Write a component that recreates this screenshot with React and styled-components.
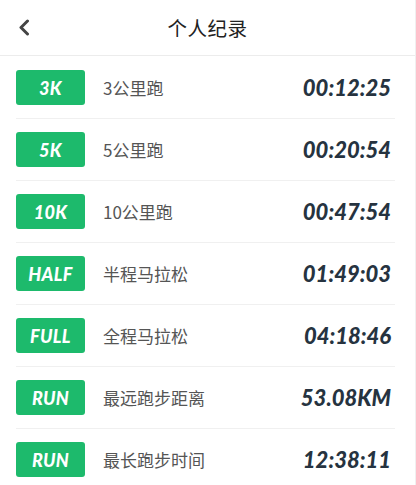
import React from 'react';
import styled, { createGlobalStyle } from 'styled-components';

const GlobalStyle = createGlobalStyle`
  html, body {
    margin: 0;
    padding: 0;
    background: #fff;
  }
  body {
    font-family: "Noto Sans CJK SC", "Noto Sans", sans-serif;
  }
`;

const records = [
  { tag: '3K', name: '3公里跑', value: '00:12:25' },
  { tag: '5K', name: '5公里跑', value: '00:20:54' },
  { tag: '10K', name: '10公里跑', value: '00:47:54' },
  { tag: 'HALF', name: '半程马拉松', value: '01:49:03' },
  { tag: 'FULL', name: '全程马拉松', value: '04:18:46' },
  { tag: 'RUN', name: '最远跑步距离', value: '53.08KM' },
  { tag: 'RUN', name: '最长跑步时间', value: '12:38:11' },
];

const Page = styled.div`
  width: 416px;
  height: 485px;
  overflow: hidden;
  box-sizing: border-box;
  border-right: 1px solid #f0f0f0;
  background: #fff;
`;

const Header = styled.div`
  height: 55px;
  display: flex;
  align-items: center;
  justify-content: center;
  position: relative;
  border-bottom: 1px solid #ececec;
`;

const BackButton = styled.div`
  position: absolute;
  left: 14px;
  top: 17px;
  width: 20px;
  height: 20px;
  display: flex;
  align-items: center;
  justify-content: center;
`;

const Title = styled.div`
  font-size: 19.5px;
  color: #222;
  letter-spacing: 0.5px;
`;

const List = styled.div`
  padding: 1px 20px 0 16px;
`;

const Row = styled.div`
  height: 61px;
  display: flex;
  align-items: center;
  border-bottom: 1px solid #f0f0f0;
`;

const Badge = styled.div`
  width: 69px;
  height: 35px;
  border-radius: 3px;
  background: #1dba6c;
  color: #fff;
  display: flex;
  align-items: center;
  justify-content: center;
  font-family: Lato, "Open Sans", sans-serif;
  font-weight: 900;
  font-style: italic;
  font-size: 18px;
  letter-spacing: 0.3px;
`;

const Label = styled.div`
  margin-left: 18px;
  flex: 1;
  font-size: 17px;
  color: #555;
`;

const Value = styled.div`
  font-family: Lato, "Open Sans", sans-serif;
  font-weight: 900;
  font-style: italic;
  font-size: 22px;
  color: #263340;
  margin-right: 4px;
`;

const App = () => {
  return (
    <Page>
      <GlobalStyle />
      <Header>
        <BackButton>
          <svg width="12" height="17" viewBox="0 0 12 17">
            <path d="M9.5 2 L3 8.5 L9.5 15" fill="none" stroke="#444" strokeWidth="3" strokeLinecap="round" strokeLinejoin="round" />
          </svg>
        </BackButton>
        <Title>个人纪录</Title>
      </Header>
      <List>
        {records.map((item, index) => (
          <Row key={index}>
            <Badge>{item.tag}</Badge>
            <Label>{item.name}</Label>
            <Value>{item.value}</Value>
          </Row>
        ))}
      </List>
    </Page>
  );
};

export default App;
